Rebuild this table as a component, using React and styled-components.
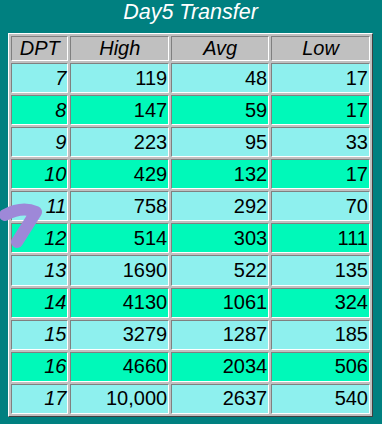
import React from "react";
import styled, { createGlobalStyle } from "styled-components";

const Global = createGlobalStyle`
  html, body { margin: 0; padding: 0; background: #008080; }
  body { font-family: "Liberation Sans", Arial, sans-serif; width: 382px; height: 424px; overflow: hidden; }
`;

const Page = styled.div`
  position: relative;
  width: 382px;
  height: 424px;
  background: #008080;
`;

const Title = styled.div`
  width: 365px;
  margin-left: 8px;
  height: 33px;
  line-height: 25px;
  text-align: center;
  color: #ffffff;
  font-style: italic;
  font-size: 21.5px;
`;

const Table = styled.table`
  margin-left: 8px;
  width: 365px;
  height: 384px;
  border-collapse: separate;
  border-spacing: 2px;
  background: #c0c0c0;
  border-style: solid;
  border-width: 1px;
  border-color: #ffffff #404040 #404040 #ffffff;
  font-size: 20px;
  color: #000;
`;

const Cell = styled.td`
  padding: 0 1px;
  border-style: solid;
  border-width: 1px;
  border-color: #808080 #ffffff #ffffff #808080;
  background: ${(p) => (p.$tone === "green" ? "#00F9B9" : "#8EF0EE")};
  font-family: "Liberation Sans", Arial, sans-serif;
  font-size: 20px;
  text-align: right;
  font-style: ${(p) => (p.$italic ? "italic" : "normal")};
  width: ${(p) => p.$w}px;
  vertical-align: middle;
`;

const Head = styled.th`
  padding: 0 1px;
  border-style: solid;
  border-width: 1px;
  border-color: #808080 #ffffff #ffffff #808080;
  background: #c0c0c0;
  font-family: "Liberation Sans", Arial, sans-serif;
  font-size: 20px;
  font-weight: normal;
  font-style: italic;
  text-align: center;
  width: ${(p) => p.$w}px;
`;

const Mark = styled.svg`
  position: absolute;
  left: 0;
  top: 196px;
  pointer-events: none;
`;

const rows = [
  ["7", "119", "48", "17"],
  ["8", "147", "59", "17"],
  ["9", "223", "95", "33"],
  ["10", "429", "132", "17"],
  ["11", "758", "292", "70"],
  ["12", "514", "303", "111"],
  ["13", "1690", "522", "135"],
  ["14", "4130", "1061", "324"],
  ["15", "3279", "1287", "185"],
  ["16", "4660", "2034", "506"],
  ["17", "10,000", "2637", "540"],
];

const widths = [54, 96, 96, 97];

export default function App() {
  return (
    <Page>
      <Global />
      <Title>Day5 Transfer</Title>
      <Table>
        <thead>
          <tr>
            {["DPT", "High", "Avg", "Low"].map((h, i) => (
              <Head key={h} $w={widths[i]}>{h}</Head>
            ))}
          </tr>
        </thead>
        <tbody>
          {rows.map((r, ri) => (
            <tr key={r[0]}>
              {r.map((v, ci) => (
                <Cell
                  key={ci}
                  $w={widths[ci]}
                  $italic={ci === 0}
                  $tone={ri % 2 === 1 ? "green" : "light"}
                >
                  {v}
                </Cell>
              ))}
            </tr>
          ))}
        </tbody>
      </Table>
      <Mark width="50" height="54" viewBox="0 0 50 54">
        <path
          d="M5 19 Q 22 10 36 16 L 17 46"
          fill="none"
          stroke="#9E88D8"
          strokeWidth="12"
          strokeLinecap="round"
          strokeLinejoin="round"
        />
      </Mark>
    </Page>
  );
}
